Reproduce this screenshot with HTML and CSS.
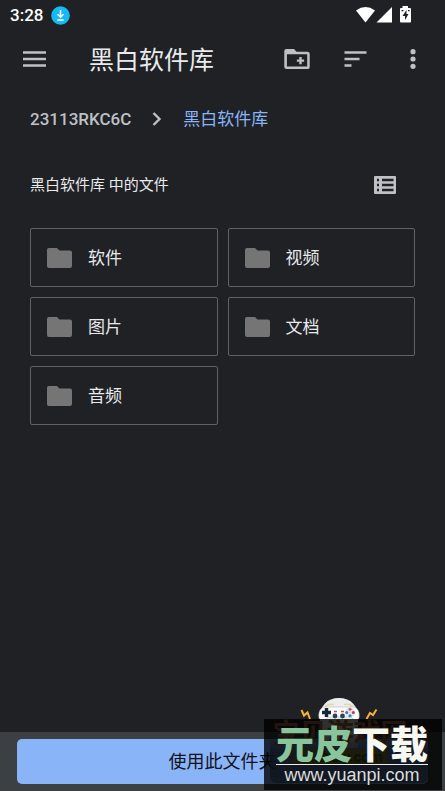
FILE: index.html
```html
<!DOCTYPE html>
<html lang="zh-CN">
<head>
<meta charset="utf-8">
<meta name="viewport" content="width=device-width, initial-scale=1">
<title>黑白软件库</title>
<link rel="stylesheet" href="styles.css">
</head>
<body>
<svg width="0" height="0" class="defs" aria-hidden="true">
  <symbol id="folder" viewBox="0 0 25 20"><path d="M2 0h8l2.500 2.500h10.500a2 2 0 0 1 2 2V18a2 2 0 0 1-2 2H2a2 2 0 0 1-2-2V2a2 2 0 0 1 2-2z" fill="#757575"/></symbol>
</svg>

<div class="status">
  <span class="time">3:28</span>
  <svg width="19" height="19" viewBox="0 0 19 19" aria-hidden="true"><circle cx="9.500" cy="9.500" r="9.300" fill="#14b9f5"/><path d="M9.500 4v7M6.500 8.300l3 3 3-3M6.300 14h6.400" fill="none" stroke="#fff" stroke-width="1.500"/></svg>
  <svg class="signals" width="56" height="18" viewBox="0 0 56 18" aria-hidden="true">
    <path d="M0 4.500Q9.500-2.300 19 4.500L9.500 16.500z" fill="#fff"/>
    <path d="M20.500 16.500H36V1z" fill="#fff"/>
    <path d="M46.500 0h5.500v2h2q1 0 1 1v12.500q0 1-1 1h-9q-1 0-1-1V3q0-1 1-1h1.500z" fill="#fff"/>
    <path d="M50.500 4l-4 6h2.500v4l3.500-6h-2zM45.500 4h2v1.300h-2zM52 4h1.500v1.300H52z" fill="#202124"/>
  </svg>
</div>

<header class="toolbar">
  <button class="icon" aria-label="菜单"><svg width="24" height="16" viewBox="0 0 24 16"><path d="M0 1.500h23M0 8h23M0 14.500h23" stroke="#bdc1c6" stroke-width="2.400"/></svg></button>
  <h1>黑白软件库</h1>
  <button class="icon" aria-label="新建文件夹"><svg width="26" height="21" viewBox="0 0 26 21"><path d="M2.500 0h7.500l2.500 2.700h11a2.200 2.200 0 0 1 2.200 2.200v13a2.200 2.200 0 0 1-2.200 2.200h-21A2.200 2.200 0 0 1 .300 18V2.200A2.200 2.200 0 0 1 2.500 0zM2.900 5.200v12.400h20.300V5.200z" fill="#bdc1c6" fill-rule="evenodd"/><path d="M16.500 8v7.200M12.900 11.600h7.200" stroke="#bdc1c6" stroke-width="2.400"/></svg></button>
  <button class="icon" aria-label="排序"><svg width="24" height="16" viewBox="0 0 24 16"><path d="M1.500 1.500h22M1.500 8h15M1.500 14.500h7" stroke="#bdc1c6" stroke-width="2.500"/></svg></button>
  <button class="icon" aria-label="更多"><svg width="6" height="20" viewBox="0 0 6 20"><g fill="#bdc1c6"><circle cx="3" cy="2.700" r="2.600"/><circle cx="3" cy="10" r="2.600"/><circle cx="3" cy="17.300" r="2.600"/></g></svg></button>
</header>

<nav class="crumbs" aria-label="路径">
  <a href="#root">23113RKC6C</a>
  <svg width="10" height="14" viewBox="0 0 10 14" aria-hidden="true"><path d="M1.500 1l6 6-6 6" fill="none" stroke="#bdc1c6" stroke-width="2.400"/></svg>
  <a class="current" href="#current">黑白软件库</a>
</nav>

<main>
  <div class="section">
    <h2>黑白软件库 中的文件</h2>
    <button class="icon" aria-label="列表视图"><svg width="22" height="18" viewBox="0 0 22 18"><path d="M1 0h20q1 0 1 1v16q0 1-1 1H1q-1 0-1-1V1q0-1 1-1zM3 2.700v2.600h2V2.700zM8 2.700v2.600h11.500V2.700zM3 7.700v2.600h2V7.700zM8 7.700v2.600h11.500V7.700zM3 12.700v2.600h2v-2.600zM8 12.700v2.600h11.500v-2.600z" fill="#bdc1c6" fill-rule="evenodd"/></svg></button>
  </div>
  <div class="grid">
    <button class="card"><svg width="25" height="20"><use href="#folder"/></svg><span>软件</span></button>
    <button class="card"><svg width="25" height="20"><use href="#folder"/></svg><span>视频</span></button>
    <button class="card"><svg width="25" height="20"><use href="#folder"/></svg><span>图片</span></button>
    <button class="card"><svg width="25" height="20"><use href="#folder"/></svg><span>文档</span></button>
    <button class="card"><svg width="25" height="20"><use href="#folder"/></svg><span>音频</span></button>
  </div>
</main>

<footer class="bottom">
  <button class="use">使用此文件夹</button>
</footer>

<aside class="watermark">
  <svg class="mascot" width="78" height="50" viewBox="0 0 78 50" aria-hidden="true">
    <path d="M20 50V19C20 8 27 0 39 0s19 8 19 19v31z" fill="#eceeee"/>
    <path d="M25 8.500q4-3 9-2M44 6.500q5-1 9 2" fill="none" stroke="#e8d89a" stroke-width="1.500"/>
    <path d="M25 9h28c5 0 7 6 6 11-1 3-5 3-8-1H28c-3 4-8 4-9 1-1-5 1-11 6-11z" fill="#fafbfb" stroke="#aab" stroke-width=".500"/>
    <path d="M26.500 10v9M22 14.500h9" stroke="#152a36" stroke-width="3.400"/>
    <circle cx="50" cy="14.500" r="5" fill="#dce5ed"/>
    <circle cx="50" cy="11.200" r="1.500" fill="#e25762"/><circle cx="53.300" cy="14.500" r="1.500" fill="#c43948"/><circle cx="50" cy="17.800" r="1.500" fill="#3a88a0"/><circle cx="46.700" cy="14.500" r="1.500" fill="#4572c0"/>
    <path d="M34 13.500h3M41 13.500h3" stroke="#c84852" stroke-width="1.500"/>
    <circle cx="35" cy="18" r="2.400" fill="#274454"/><circle cx="42.500" cy="18" r="2.400" fill="#274454"/>
    <path d="M1.500 12l2.500 5.500 3.500-3L10 21M76.500 11.500L73 17l-3-2-3.500 6" fill="none" stroke="#f5b234" stroke-width="2"/>
  </svg>
  <div class="under">
    <span class="site">宝贝游戏网</span>
    <span class="domain">baobeiy.com</span>
  </div>
  <div class="label">
    <strong><span>元皮</span>下载</strong>
    <span class="url">www.yuanpi.com</span>
  </div>
</aside>
</body>
</html>
```
FILE: styles.css
```css
* { box-sizing: border-box; }
body {
  margin: 0;
  min-height: 100vh;
  display: flex;
  flex-direction: column;
  background: #202124;
  color: #e8eaed;
  font-family: Roboto, "Noto Sans CJK SC", sans-serif;
}
button {
  border: 0;
  padding: 0;
  background: none;
  color: inherit;
  font: inherit;
}
a { color: inherit; text-decoration: none; }
svg { display: block; flex: none; }
h1, h2 { margin: 0; font-weight: 400; }
.defs { position: absolute; }

.status {
  display: flex;
  align-items: center;
  gap: 8px;
  height: 30px;
  padding: 0 33px 0 10px;
}
.time { color: #fff; font-size: 17px; font-weight: 500; line-height: 30px; }
.signals { margin-left: auto; }

.toolbar {
  display: flex;
  align-items: center;
  height: 58px;
  padding: 0 8px 0 11px;
}
.icon {
  display: grid;
  place-items: center;
  width: 48px;
  height: 48px;
}
.toolbar .icon + .icon { margin-left: 10px; }
.toolbar h1 {
  flex: 1;
  padding-top: 4px;
  margin-left: 30px;
  font-size: 25px;
  line-height: 32px;
}

.crumbs {
  display: flex;
  align-items: center;
  gap: 21px;
  height: 62px;
  padding: 0 30px;
  color: #bdc1c6;
  font-size: 17px;
  font-weight: 500;
  line-height: 20px;
}
.crumbs .current { color: #8ab4f8; font-weight: 400; }

main { flex: 1; padding: 0 30px; }
.section {
  display: flex;
  align-items: center;
  justify-content: space-between;
  height: 70px;
  padding-right: 6px;
}
.section h2 { font-size: 15px; line-height: 20px; }
.grid {
  display: grid;
  grid-template-columns: 1fr 1fr;
  gap: 10px;
  padding-top: 8px;
}
.card {
  display: flex;
  align-items: center;
  gap: 16px;
  height: 59px;
  padding: 0 16px;
  border: 1px solid #5f6368;
  border-radius: 2px;
  font-size: 17px;
  line-height: 20px;
}

.bottom { padding: 7px 17px; background: #3c4043; }
.use {
  width: 100%;
  height: 45px;
  border-radius: 5px;
  background: #8ab4f8;
  color: #101318;
  font-size: 18px;
  line-height: 20px;
}

.watermark {
  position: absolute;
  right: 3px;
  bottom: 1px;
  width: 178px;
}
.mascot { margin: 0 0 -29px 36px; }
.under {
  position: absolute;
  right: 14px;
  bottom: 7px;
  left: 6px;
  display: flex;
  flex-direction: column;
  align-items: center;
  padding-right: 18px;
  border-radius: 0 0 6px 6px;
  background: linear-gradient(transparent 16px, rgba(70, 95, 140, .7) 34px);
}
.site { color: #a86a3c; font-size: 27px; font-weight: 700; line-height: 30px; }
.domain {
  padding: 0 4px;
  margin-bottom: 18px;
  background: #85883c;
  color: #48551b;
  font-size: 15px;
  font-weight: 700;
  line-height: 16px;
}
.label {
  position: relative;
  display: flex;
  flex-direction: column;
  align-items: center;
  height: 71px;
  padding-right: 2px;
  background: rgba(0, 0, 0, .8);
}
.label strong {
  color: #f8f8f3;
  font-family: "Noto Sans CJK SC", sans-serif;
  font-size: 38px;
  font-style: oblique 8deg;
  font-weight: 900;
  line-height: 45px;
  border-bottom: 1px solid #eee;
}
.label strong span { color: #88c49c; }
.url {
  color: #ddd;
  font-family: "Liberation Sans", sans-serif;
  font-size: 18px;
  line-height: 20px;
}
```
